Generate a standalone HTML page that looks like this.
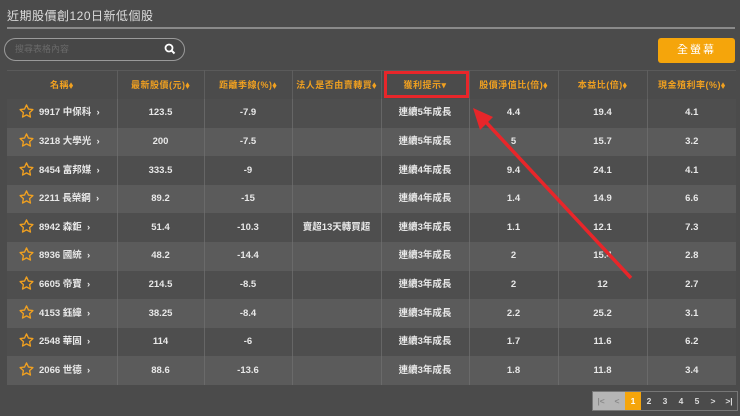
<!DOCTYPE html>
<html><head><meta charset="utf-8"><style>
*{margin:0;padding:0;box-sizing:border-box}
body{width:740px;height:416px;background:#4b4b4b;font-family:"Liberation Sans","Noto Sans CJK TC",sans-serif;color:#e8e8e8;position:relative;overflow:hidden}
.title{position:absolute;left:7px;top:9px;font-size:12px;line-height:14px;color:#ddd;letter-spacing:.5px}
.hr{position:absolute;left:7px;right:5px;top:27px;height:2px;background:#8a8a8a}
.search{position:absolute;left:4px;top:38px;width:181px;height:23px;border:1.5px solid #9a9a9a;border-radius:12px;background:#474747}
.search span{position:absolute;left:10px;top:5px;font-size:9px;line-height:11px;color:#6a6a6a}
.search svg{position:absolute;right:8px;top:4px}
.btn{position:absolute;left:658px;top:38px;width:77px;height:25px;background:#f5a50b;border-radius:3px;color:#fff;font-size:11px;text-align:center;line-height:25px;letter-spacing:2px}
table{position:absolute;left:7px;top:70px;width:729px;border-collapse:collapse;font-size:9.5px;table-layout:fixed}
tr{height:28.6px}
th{height:28px;line-height:28px;color:#f0a020;font-weight:bold;font-size:9px;border-right:1px solid #5e5e5e;border-top:1px solid #5a5a5a;letter-spacing:.5px;vertical-align:middle;white-space:nowrap;overflow:hidden}
td{height:28.6px;line-height:28px;text-align:center;border-right:1px solid #666;font-weight:bold;vertical-align:middle;white-space:nowrap}
th:last-child,td:last-child{border-right:none}
tr.o td{background:#4e4e4e}
tr.e td{background:#5b5b5b;border-right-color:#6a6a6a}
td.n{text-align:left;padding-left:12px}
.star{display:inline-block;vertical-align:middle;margin-right:5px;margin-top:-3px}
.ar{font-size:9px;color:#f0a020}
.pg{position:absolute;left:592px;top:391px;height:20px;display:flex;border:1px solid #777}
.pg div{width:16px;height:18px;line-height:18px;text-align:center;font-size:8.5px;color:#ddd;font-weight:bold}
</style></head><body>
<div class="title">近期股價創120日新低個股</div>
<div class="hr"></div>
<div class="search"><span>搜尋表格內容</span><svg width="12" height="12" viewBox="0 0 12 12"><circle cx="5" cy="5" r="3.5" fill="none" stroke="#fff" stroke-width="1.8"/><path d="M7.6 7.6 L10.5 10.5" stroke="#fff" stroke-width="2"/></svg></div>
<div class="btn">全螢幕</div>
<table>
<tr><th style="width:110px">名稱<span class="ar">⬧</span></th><th style="width:87px">最新股價(元)<span class="ar">⬧</span></th><th style="width:88px">距離季線(%)<span class="ar">⬧</span></th><th style="width:89px">法人是否由賣轉買<span class="ar">⬧</span></th><th style="width:88px">獲利提示<span class="ar">▾</span></th><th style="width:89px">股價淨值比(倍)<span class="ar">⬧</span></th><th style="width:89px">本益比(倍)<span class="ar">⬧</span></th><th>現金殖利率(%)<span class="ar">⬧</span></th></tr>
<tr class="o"><td class="n"><svg class="star" width="15" height="14" viewBox="0 0 24 23"><path d="M12 1.5l3.2 6.8 7.3.9-5.4 5 1.4 7.3L12 17.9l-6.5 3.6 1.4-7.3-5.4-5 7.3-.9z" fill="none" stroke="#f0a020" stroke-width="2.2" stroke-linejoin="round"/></svg>9917 中保科 &nbsp;›</td><td>123.5</td><td>-7.9</td><td></td><td>連續5年成長</td><td>4.4</td><td>19.4</td><td>4.1</td></tr>
<tr class="e"><td class="n"><svg class="star" width="15" height="14" viewBox="0 0 24 23"><path d="M12 1.5l3.2 6.8 7.3.9-5.4 5 1.4 7.3L12 17.9l-6.5 3.6 1.4-7.3-5.4-5 7.3-.9z" fill="none" stroke="#f0a020" stroke-width="2.2" stroke-linejoin="round"/></svg>3218 大學光 &nbsp;›</td><td>200</td><td>-7.5</td><td></td><td>連續5年成長</td><td>5</td><td>15.7</td><td>3.2</td></tr>
<tr class="o"><td class="n"><svg class="star" width="15" height="14" viewBox="0 0 24 23"><path d="M12 1.5l3.2 6.8 7.3.9-5.4 5 1.4 7.3L12 17.9l-6.5 3.6 1.4-7.3-5.4-5 7.3-.9z" fill="none" stroke="#f0a020" stroke-width="2.2" stroke-linejoin="round"/></svg>8454 富邦媒 &nbsp;›</td><td>333.5</td><td>-9</td><td></td><td>連續4年成長</td><td>9.4</td><td>24.1</td><td>4.1</td></tr>
<tr class="e"><td class="n"><svg class="star" width="15" height="14" viewBox="0 0 24 23"><path d="M12 1.5l3.2 6.8 7.3.9-5.4 5 1.4 7.3L12 17.9l-6.5 3.6 1.4-7.3-5.4-5 7.3-.9z" fill="none" stroke="#f0a020" stroke-width="2.2" stroke-linejoin="round"/></svg>2211 長榮鋼 &nbsp;›</td><td>89.2</td><td>-15</td><td></td><td>連續4年成長</td><td>1.4</td><td>14.9</td><td>6.6</td></tr>
<tr class="o"><td class="n"><svg class="star" width="15" height="14" viewBox="0 0 24 23"><path d="M12 1.5l3.2 6.8 7.3.9-5.4 5 1.4 7.3L12 17.9l-6.5 3.6 1.4-7.3-5.4-5 7.3-.9z" fill="none" stroke="#f0a020" stroke-width="2.2" stroke-linejoin="round"/></svg>8942 森鉅 &nbsp;›</td><td>51.4</td><td>-10.3</td><td>賣超13天轉買超</td><td>連續3年成長</td><td>1.1</td><td>12.1</td><td>7.3</td></tr>
<tr class="e"><td class="n"><svg class="star" width="15" height="14" viewBox="0 0 24 23"><path d="M12 1.5l3.2 6.8 7.3.9-5.4 5 1.4 7.3L12 17.9l-6.5 3.6 1.4-7.3-5.4-5 7.3-.9z" fill="none" stroke="#f0a020" stroke-width="2.2" stroke-linejoin="round"/></svg>8936 國統 &nbsp;›</td><td>48.2</td><td>-14.4</td><td></td><td>連續3年成長</td><td>2</td><td>15.4</td><td>2.8</td></tr>
<tr class="o"><td class="n"><svg class="star" width="15" height="14" viewBox="0 0 24 23"><path d="M12 1.5l3.2 6.8 7.3.9-5.4 5 1.4 7.3L12 17.9l-6.5 3.6 1.4-7.3-5.4-5 7.3-.9z" fill="none" stroke="#f0a020" stroke-width="2.2" stroke-linejoin="round"/></svg>6605 帝寶 &nbsp;›</td><td>214.5</td><td>-8.5</td><td></td><td>連續3年成長</td><td>2</td><td>12</td><td>2.7</td></tr>
<tr class="e"><td class="n"><svg class="star" width="15" height="14" viewBox="0 0 24 23"><path d="M12 1.5l3.2 6.8 7.3.9-5.4 5 1.4 7.3L12 17.9l-6.5 3.6 1.4-7.3-5.4-5 7.3-.9z" fill="none" stroke="#f0a020" stroke-width="2.2" stroke-linejoin="round"/></svg>4153 鈺緯 &nbsp;›</td><td>38.25</td><td>-8.4</td><td></td><td>連續3年成長</td><td>2.2</td><td>25.2</td><td>3.1</td></tr>
<tr class="o"><td class="n"><svg class="star" width="15" height="14" viewBox="0 0 24 23"><path d="M12 1.5l3.2 6.8 7.3.9-5.4 5 1.4 7.3L12 17.9l-6.5 3.6 1.4-7.3-5.4-5 7.3-.9z" fill="none" stroke="#f0a020" stroke-width="2.2" stroke-linejoin="round"/></svg>2548 華固 &nbsp;›</td><td>114</td><td>-6</td><td></td><td>連續3年成長</td><td>1.7</td><td>11.6</td><td>6.2</td></tr>
<tr class="e"><td class="n"><svg class="star" width="15" height="14" viewBox="0 0 24 23"><path d="M12 1.5l3.2 6.8 7.3.9-5.4 5 1.4 7.3L12 17.9l-6.5 3.6 1.4-7.3-5.4-5 7.3-.9z" fill="none" stroke="#f0a020" stroke-width="2.2" stroke-linejoin="round"/></svg>2066 世德 &nbsp;›</td><td>88.6</td><td>-13.6</td><td></td><td>連續3年成長</td><td>1.8</td><td>11.8</td><td>3.4</td></tr>
</table>
<div style="position:absolute;left:384px;top:71px;width:85px;height:27px;border:3px solid #e8262a"></div>
<svg style="position:absolute;left:0;top:0" width="740" height="416"><line x1="631" y1="278" x2="484" y2="120" stroke="#e8262a" stroke-width="3.5"/><polygon points="473,108 493,117 480,130" fill="#e8262a"/></svg>
<div class="pg"><div style="background:#b5b5b5;color:#888">|&lt;</div><div style="background:#b5b5b5;color:#888">&lt;</div><div style="background:#f5a50b;color:#fff">1</div><div>2</div><div>3</div><div>4</div><div>5</div><div>&gt;</div><div>&gt;|</div></div>
</body></html>
